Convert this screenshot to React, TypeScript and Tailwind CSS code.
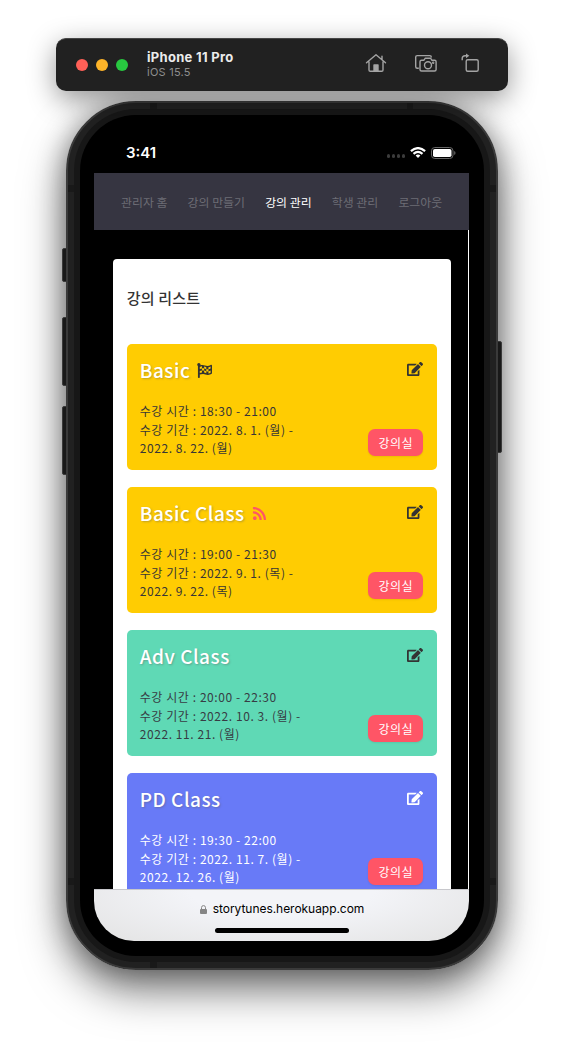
import type { ReactNode } from "react";
import { FaEdit, FaFlagCheckered, FaRss } from "react-icons/fa";

type Lecture = {
  name: string;
  time: string;
  period: string[];
  card: string;
  edit: string;
  badge?: ReactNode;
};

const lectures: Lecture[] = [
  {
    name: "Basic",
    time: "18:30 - 21:00",
    period: ["2022. 8. 1. (월) -", "2022. 8. 22. (월)"],
    card: "bg-[#ffcc02] text-[#373636]",
    edit: "text-[#333333]",
    badge: <FaFlagCheckered className="size-[15px] text-[#333333]" />,
  },
  {
    name: "Basic Class",
    time: "19:00 - 21:30",
    period: ["2022. 9. 1. (목) -", "2022. 9. 22. (목)"],
    card: "bg-[#ffcc02] text-[#373636]",
    edit: "text-[#333333]",
    badge: <FaRss className="size-[15px] text-[#ff5566]" />,
  },
  {
    name: "Adv Class",
    time: "20:00 - 22:30",
    period: ["2022. 10. 3. (월) -", "2022. 11. 21. (월)"],
    card: "bg-[#5fd9b5] text-[#373c44]",
    edit: "text-[#333333]",
  },
  {
    name: "PD Class",
    time: "19:30 - 22:00",
    period: ["2022. 11. 7. (월) -", "2022. 12. 26. (월)"],
    card: "bg-[#687af7] text-white",
    edit: "text-white",
  },
];

const navItems = ["관리자 홈", "강의 만들기", "강의 관리", "학생 관리", "로그아웃"];

function Toolbar() {
  return (
    <header className="relative z-10 ml-[56px] flex h-[53px] w-[452px] items-center rounded-[10px] border-t border-[#464646] bg-[#212121] pl-5 font-['Inter',sans-serif] shadow-[0_8px_28px_rgba(0,0,0,0.42)]">
      <div className="-mt-px flex gap-2">
        <span className="size-3 rounded-full bg-[#ff6057]" />
        <span className="size-3 rounded-full bg-[#feb429]" />
        <span className="size-3 rounded-full bg-[#28c840]" />
      </div>
      <div className="ml-[19px] w-[218px] -translate-y-px">
        <div className="text-[13px] leading-[15px] font-bold tracking-[0.3px] text-[#ececec]">iPhone 11 Pro</div>
        <div className="text-[11px] leading-[14px] tracking-[0.25px] text-[#8f8f8f]">iOS 15.5</div>
      </div>
      <svg className="-mt-1 h-5 w-[22px]" viewBox="0 0 22 20" fill="none" stroke="#a4a4a4" strokeWidth="1.4" strokeLinejoin="round" strokeLinecap="round">
        <path d="M1.5 9.7 11 1.8l9.5 7.9M4 8.5V17q0 1.3 1.3 1.3h11.4q1.3 0 1.3-1.3V8.5M17 3.2v3.1" />
        <path d="M9 18v-6h4v6z" fill="#a4a4a4" />
      </svg>
      <svg className="-mt-1 ml-[27px] h-5 w-6" viewBox="0 0 24 20" fill="none" stroke="#a4a4a4" strokeWidth="1.4" strokeLinejoin="round">
        <path d="M4.8 15.2H3.2Q1.7 15.2 1.7 13.7V4.1q0-1.5 1.5-1.5h12.6q1.5 0 1.5 1.5v.5" />
        <path d="M6 8.8q0-1.5 1.5-1.5h2.3l1.5-2.1h5.2L18 7.3h2.6q1.5 0 1.5 1.5v7.7q0 1.5-1.5 1.5H7.5Q6 18 6 16.5z" />
        <circle cx="14" cy="12.3" r="3.5" />
        <circle cx="19.2" cy="9.7" r=".5" />
      </svg>
      <svg className="-mt-1 ml-[22px] h-[22px] w-5" viewBox="0 0 20 22" fill="none" stroke="#a4a4a4" strokeWidth="1.4">
        <rect x="6.2" y="7.7" width="12" height="11.5" rx="1.5" />
        <path d="M2.2 8.2V6.6Q2.2 3.8 5 3.8h2" />
        <path d="M6 1.4 9.3 3.8 6 6.2z" fill="#a4a4a4" stroke="none" />
      </svg>
    </header>
  );
}

function StatusBar() {
  return (
    <div className="flex h-[58px] items-center pt-[17px] pr-[28px] pl-[46px] font-['Inter',sans-serif]">
      <span className="text-[15px] leading-4 font-semibold text-white">3:41</span>
      <span className="mt-[7px] ml-auto flex gap-[1.5px]">
        <i className="size-[3.5px] rounded-full bg-[#3c3c3c]" />
        <i className="size-[3.5px] rounded-full bg-[#3c3c3c]" />
        <i className="size-[3.5px] rounded-full bg-[#3c3c3c]" />
        <i className="size-[3.5px] rounded-full bg-[#3c3c3c]" />
      </span>
      <svg className="ml-[5px] h-[11px] w-4" viewBox="0 0 16 11" fill="none" stroke="#fff" strokeWidth="2.2">
        <path d="M.9 4.2Q8-2 15.1 4.2" />
        <path d="M3.5 6.8Q8 3 12.5 6.8" />
        <path d="m8 11-2.4-2.6Q8 6.7 10.4 8.4z" fill="#fff" stroke="none" />
      </svg>
      <svg className="ml-[5px] h-3 w-[25px]" viewBox="0 0 25 12">
        <rect x=".5" y=".5" width="21.5" height="11" rx="3.3" fill="none" stroke="#666" />
        <rect x="2" y="2" width="18.5" height="8" rx="1.8" fill="#fff" />
        <path d="M23.2 4v4q1.3-.6 1.3-2t-1.3-2" fill="#666" />
      </svg>
    </div>
  );
}

function LectureCard({ lecture }: { lecture: Lecture }) {
  return (
    <article className={`flex h-[126px] shrink-0 justify-between rounded-[5px] pr-[13.5px] pl-[13px] ${lecture.card}`}>
      <div>
        <h2 className="mt-[11px] flex h-[30px] items-center gap-[7px] text-[19px] font-medium tracking-[0.5px] text-white">
          <span className="[text-shadow:1px_1px_2px_rgba(90,90,90,0.4)]">{lecture.name}</span>
          {lecture.badge}
        </h2>
        <div className="mt-[17px] text-[12px] leading-[18.7px] tracking-[0.57px] whitespace-nowrap">
          <p>수강 시간 : {lecture.time}</p>
          <p>수강 기간 : {lecture.period[0]}</p>
          <p>{lecture.period[1]}</p>
        </div>
      </div>
      <div className="flex flex-col items-end justify-between pt-[17px] pb-[14px]">
        <FaEdit className={`h-4 w-4 ${lecture.edit}`} />
        <button className="h-[27px] w-[55px] rounded-[7px] bg-[#ff5566] text-[12px] leading-[27px] tracking-[0.5px] text-white shadow-[0_1px_2px_rgba(0,0,0,0.08)]">
          강의실
        </button>
      </div>
    </article>
  );
}

function Screen() {
  return (
    <div className="ml-[14px] flex h-[768px] w-[375px] flex-col overflow-hidden rounded-b-[40px] bg-black font-['Noto_Sans_CJK_KR',sans-serif]">
      <nav className="flex h-[57px] shrink-0 items-center gap-[20.2px] bg-[#363541] pt-[0.5px] pl-[27px] text-[11.9px] whitespace-nowrap text-[#6d6d75]">
        {navItems.map((item) => (
          <a key={item} className={item === "강의 관리" ? "text-white" : ""}>
            {item}
          </a>
        ))}
      </nav>
      <main className="h-[659px] overflow-hidden border-r border-white bg-black pt-[29px] pl-[19px]">
        <section className="h-[700px] w-[337.5px] rounded-t-[4px] bg-white px-[13.75px] pt-[25px]">
          <h1 className="h-[60px] text-[15px] leading-[28px] font-medium tracking-[0.2px] text-[#333333]">강의 리스트</h1>
          <div className="flex flex-col gap-[17px]">
            {lectures.map((lecture) => (
              <LectureCard key={lecture.name} lecture={lecture} />
            ))}
          </div>
        </section>
      </main>
      <footer className="flex h-[52px] shrink-0 flex-col items-center border-t border-[#c8c8cc] bg-[radial-gradient(ellipse_at_top,#f3f4f8_35%,#e3e3e3_100%)] pt-[9px] font-['Inter',sans-serif]">
        <div className="flex h-5 items-center gap-[6px] pl-px text-[12px] tracking-[-0.04px] text-black">
          <svg className="h-[9px] w-[7px]" viewBox="0 0 7 9">
            <rect y="4" width="7" height="5" rx="1" fill="#858585" />
            <path d="M1.5 4.5V2.6a2 2 0 0 1 4 0v1.9" fill="none" stroke="#858585" />
          </svg>
          storytunes.herokuapp.com
        </div>
        <div className="mt-[9px] h-[5px] w-[134px] rounded-full bg-black" />
      </footer>
    </div>
  );
}

function Phone() {
  return (
    <div className="relative mt-[10px] ml-[66px] h-[869px] w-[432px] rounded-[70px] shadow-[0_20px_44px_rgba(0,0,0,0.52),0_2px_28px_rgba(0,0,0,0.34)]">
      <i className="absolute top-[147px] -left-[4px] h-[34px] w-[6px] rounded-[2px] border border-[#3a3a3a] bg-[#191919]" />
      <i className="absolute top-[216px] -left-[4px] h-[69px] w-[6px] rounded-[2px] border border-[#3a3a3a] bg-[#191919]" />
      <i className="absolute top-[305px] -left-[4px] h-[69px] w-[6px] rounded-[2px] border border-[#3a3a3a] bg-[#191919]" />
      <i className="absolute top-[240px] -right-[4px] h-[112px] w-[6px] rounded-[2px] border border-[#3a3a3a] bg-[#191919]" />
      <div className="relative h-full rounded-[70px] border-2 border-[#3a3a3a] bg-[#212121] p-[6px]">
        <i className="absolute top-0 left-[82px] h-[7px] w-[7px] bg-[#191919]" />
        <i className="absolute top-0 right-[83px] h-[7px] w-[6px] bg-[#191919]" />
        <i className="absolute bottom-0 left-[82px] h-[7px] w-[7px] bg-[#191919]" />
        <i className="absolute top-[82px] left-0 h-[7px] w-[7px] bg-[#191919]" />
        <i className="absolute top-[82px] right-0 h-[7px] w-[7px] bg-[#191919]" />
        <i className="absolute bottom-[83px] left-0 h-[7px] w-[7px] bg-[#191919]" />
        <i className="absolute right-0 bottom-[83px] h-[7px] w-[7px] bg-[#191919]" />
        <div className="relative h-full rounded-[62px] bg-[#171717] p-[6px]">
          <div className="h-full rounded-[56px] bg-black">
            <StatusBar />
            <Screen />
          </div>
        </div>
      </div>
    </div>
  );
}

export default function App() {
  return (
    <div className="h-[1044px] w-[563px] overflow-hidden bg-white pt-[38px]">
      <Toolbar />
      <Phone />
    </div>
  );
}
